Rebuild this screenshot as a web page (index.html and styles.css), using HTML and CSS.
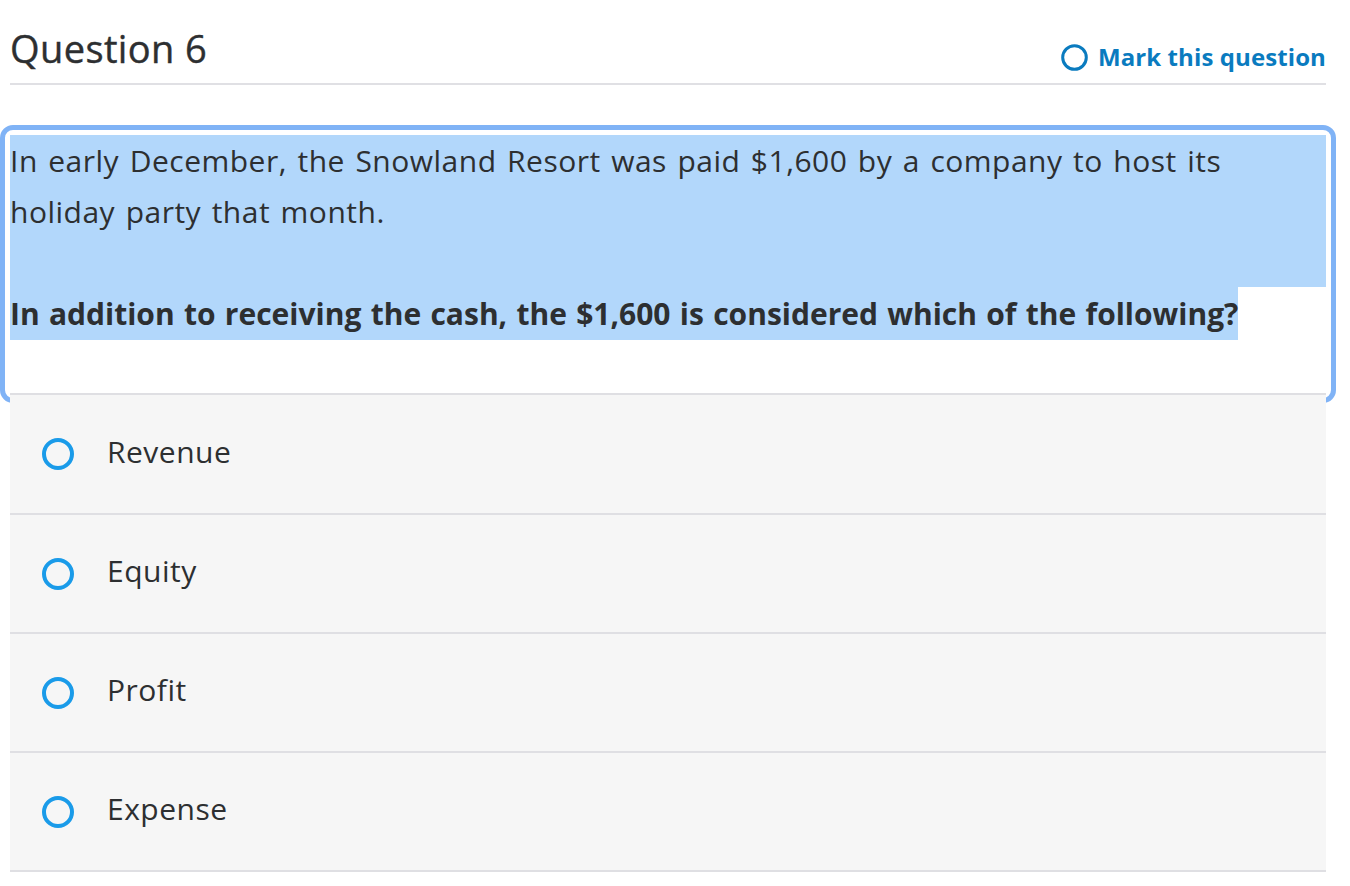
FILE: index.html
```html
<!DOCTYPE html>
<html lang="en">
<head>
<meta charset="utf-8">
<title>Question 6</title>
<link rel="stylesheet" href="styles.css">
</head>
<body>
<div class="page">
  <header class="q-header">
    <h2 class="q-title">Question 6</h2>
    <a class="mark" href="#">
      <svg class="mark-icon" width="27" height="27" viewBox="0 0 27 27"><circle cx="13.5" cy="13.5" r="11.8" fill="none" stroke="currentColor" stroke-width="3"/></svg>
      <span>Mark this question</span>
    </a>
  </header>

  <div class="question">
    <div class="stem">
      <div class="sel-block">In early December, the Snowland Resort was paid $1,600 by a company to host its<br>holiday party that month.</div>
      <p class="ask"><strong class="sel">In addition to receiving the cash, the $1,600 is considered which of the following?</strong></p>
    </div>
  </div>

  <ul class="options">
    <li class="option"><span class="radio"></span><span class="label">Revenue</span></li>
    <li class="option"><span class="radio"></span><span class="label">Equity</span></li>
    <li class="option"><span class="radio"></span><span class="label">Profit</span></li>
    <li class="option"><span class="radio"></span><span class="label">Expense</span></li>
  </ul>
</div>
</body>
</html>
```

FILE: styles.css
```css
html, body {
  margin: 0;
  padding: 0;
  background: #ffffff;
}

body {
  font-family: "Open Sans", "Liberation Sans", sans-serif;
  color: #2d2f31;
}

.page {
  padding: 0 24px 0 10px;
}

.q-header {
  height: 85px;
  box-sizing: border-box;
  border-bottom: 2px solid #e0e0e4;
  display: flex;
  justify-content: space-between;
  align-items: flex-start;
}

.q-title {
  margin: 0;
  padding-top: 23px;
  font-size: 38px;
  line-height: 50px;
  font-weight: 400;
  letter-spacing: 0.4px;
  color: #2d2f31;
  -webkit-text-stroke: 0.4px #2d2f31;
}

.mark {
  display: flex;
  align-items: center;
  gap: 10px;
  margin-top: 42px;
  color: #0a7bbf;
  text-decoration: none;
  font-size: 24px;
  font-weight: 700;
  line-height: 30px;
  letter-spacing: 0.1px;
}

.mark-icon {
  display: block;
}

.question {
  margin-top: 50px;
  border-radius: 3px;
  outline: 5px solid #80b3f6;
  outline-offset: 5px;
}

.stem {
  font-size: 30px;
  line-height: 51px;
  letter-spacing: 0.5px;
  word-spacing: 2.2px;
  padding-bottom: 53px;
}

.sel-block {
  background: #b2d7fb;
  padding-bottom: 50px;
}

.ask {
  margin: 0;
  height: 53px;
}

.sel {
  display: inline-block;
  line-height: 53px;
  background: #b2d7fb;
  font-weight: 700;
  letter-spacing: 0;
  word-spacing: 1.5px;
}

.options {
  list-style: none;
  margin: 0;
  padding: 0;
  position: relative;
  z-index: 1;
  background: #ffffff;
  border-bottom: 2px solid #dfdfe3;
}

.option {
  height: 119px;
  box-sizing: border-box;
  border-top: 2px solid #dfdfe3;
  background: #f6f6f6;
  display: flex;
  align-items: center;
  padding-left: 32px;
  font-size: 30px;
  letter-spacing: 0.5px;
}

.option:first-child {
  height: 120px;
}

.radio {
  width: 32px;
  height: 32px;
  box-sizing: border-box;
  border: 4px solid #1a9be9;
  border-radius: 50%;
  flex: none;
  margin-right: 33px;
}

.label {
  color: #2d2f31;
  position: relative;
  top: -3px;
}
```
